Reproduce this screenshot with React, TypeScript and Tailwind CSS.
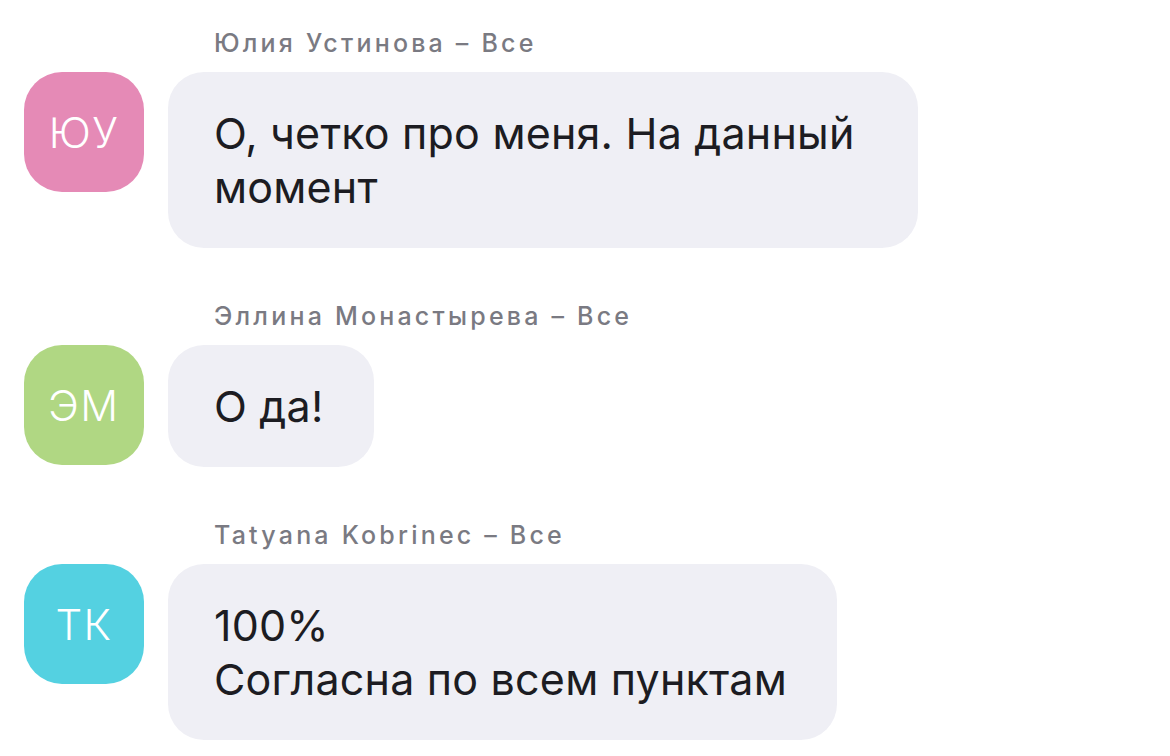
const messages = [
  {
    initials: "ЮУ",
    color: "bg-[#e58ab6]",
    name: "Юлия Устинова – Все",
    lines: ["О, четко про меня. На данный момент"],
  },
  {
    initials: "ЭМ",
    color: "bg-[#b0d783]",
    name: "Эллина Монастырева – Все",
    lines: ["О да!"],
  },
  {
    initials: "ТК",
    color: "bg-[#54d1e1]",
    name: "Tatyana Kobrinec – Все",
    lines: ["100%", "Согласна по всем пунктам"],
  },
];

export default function App() {
  return (
    <div className="min-h-[756px] w-[1170px] bg-white pl-[24px] pt-[27px] font-['Inter','Noto_Sans',sans-serif] overflow-hidden">
      <div className="flex flex-col gap-[52px]">
        {messages.map((m) => (
          <div key={m.name} className="flex flex-col">
            {/* sender */}
            <div className="ml-[190px] mb-[13px] text-[25px] leading-[32px] font-medium text-[#7a7a82] tracking-[3.2px]">
              {m.name}
            </div>
            <div className="flex items-start gap-[24px]">
              <div
                className={`${m.color} w-[120px] h-[120px] shrink-0 rounded-[38px] flex items-center justify-center text-white text-[42px] font-light tracking-[1.5px]`}
              >
                {m.initials}
              </div>
              <div className="max-w-[750px] bg-[#efeff5] rounded-[36px] pl-[46px] pr-[50px] py-[34px] text-[43px] leading-[54px] text-[#1c1c22] tracking-[0.2px]">
                {m.lines.map((l) => (
                  <div key={l}>{l}</div>
                ))}
              </div>
            </div>
          </div>
        ))}
      </div>
    </div>
  );
}
